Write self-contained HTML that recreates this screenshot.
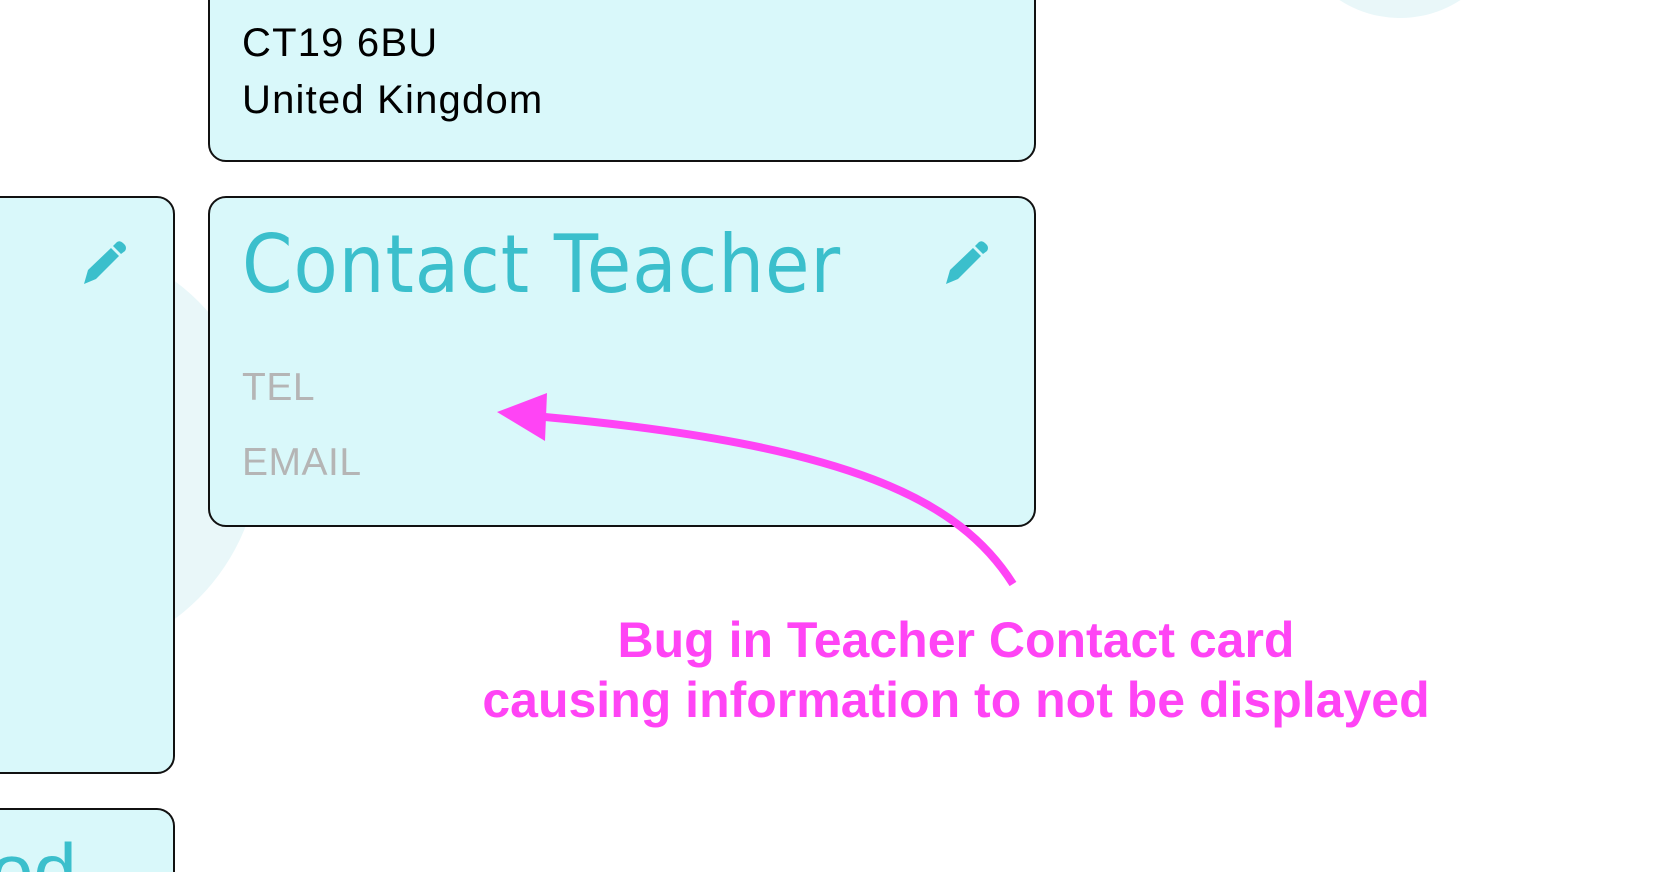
<!DOCTYPE html>
<html><head><meta charset="utf-8"><style>
html,body{margin:0;padding:0;width:1668px;height:872px;overflow:hidden;background:#fff;position:relative;font-family:"Liberation Sans",sans-serif}
.c{position:absolute;background:#d9f8fa;border:2px solid #111;border-radius:18px;box-sizing:border-box;overflow:hidden}
.t{position:absolute;white-space:nowrap}
.circ{position:absolute;border-radius:50%;background:#e9f7f9}
</style></head><body>
<div class="circ" style="left:1290px;top:-200px;width:220px;height:218px"></div>
<div class="circ" style="left:-160px;top:240px;width:420px;height:420px"></div>
<div class="c" style="left:208px;top:-30px;width:828px;height:192px"></div>
<div class="t" style="left:242px;top:18px;font-size:40px;color:#000;line-height:50px;letter-spacing:1.2px">CT19 6BU</div>
<div class="t" style="left:242px;top:75px;font-size:40px;color:#000;line-height:50px;letter-spacing:1.2px">United Kingdom</div>
<div class="c" style="left:-30px;top:196px;width:205px;height:578px"></div>
<div class="c" style="left:-30px;top:808px;width:205px;height:64px;border-bottom:none;border-bottom-left-radius:0;border-bottom-right-radius:0"></div>
<div class="t" style="left:-10px;top:826px;font-size:78px;color:#3bbfcc;line-height:90px;height:46px;overflow:hidden">od</div>
<div class="c" style="left:208px;top:196px;width:828px;height:331px"></div>
<div class="t" style="left:242px;top:220px;font-size:80px;color:#3bbfcc;line-height:90px;letter-spacing:1px;font-family:'DejaVu Sans','Liberation Sans',sans-serif;transform:scaleX(0.905);transform-origin:left">Contact Teacher</div>
<div class="t" style="left:242px;top:366px;font-size:39px;color:#b5b5b5;line-height:44px;letter-spacing:0.5px">TEL</div>
<div class="t" style="left:242px;top:441px;font-size:39px;color:#b5b5b5;line-height:44px;letter-spacing:0.5px">EMAIL</div>
<svg style="position:absolute;left:0;top:0" width="1668" height="872">
<g fill="#3bbfcc">
<path d="M84 284 L88 270 L111 248 L119 256 L96 279 Z"/><path d="M113 246 L117 242 Q120 240 123 243 L125 245 Q127 248 125 251 L121 254 Z"/>
<path d="M946 284 L950 270 L973 248 L981 256 L958 279 Z"/><path d="M975 246 L979 242 Q982 240 985 243 L987 245 Q989 248 987 251 L983 254 Z"/>
</g>
<path d="M1013 584 C960 500 850 445 545 417" fill="none" stroke="#ff44f5" stroke-width="8"/>
<path d="M497 412 L547 393 L545 441 Z" fill="#ff44f5"/>
</svg>
<div class="t" style="left:0;width:1912px;text-align:center;top:610px;font-size:50px;font-weight:bold;color:#ff44f5;line-height:60px">Bug in Teacher Contact card</div>
<div class="t" style="left:0;width:1912px;text-align:center;top:670px;font-size:50px;font-weight:bold;color:#ff44f5;line-height:60px">causing information to not be displayed</div>
</body></html>
